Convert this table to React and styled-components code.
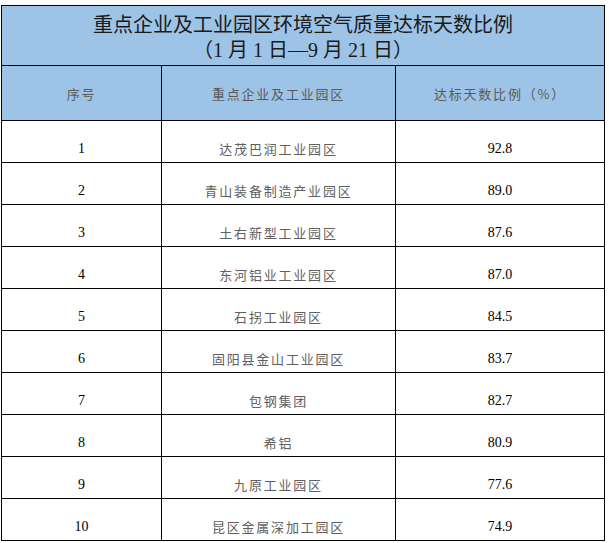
import React from "react";
import styled, { createGlobalStyle } from "styled-components";

const GlobalStyle = createGlobalStyle`
  body {
    margin: 0;
    background: #ffffff;
  }
`;

const rows = [
  { no: 1, name: "达茂巴润工业园区", rate: "92.8" },
  { no: 2, name: "青山装备制造产业园区", rate: "89.0" },
  { no: 3, name: "土右新型工业园区", rate: "87.6" },
  { no: 4, name: "东河铝业工业园区", rate: "87.0" },
  { no: 5, name: "石拐工业园区", rate: "84.5" },
  { no: 6, name: "固阳县金山工业园区", rate: "83.7" },
  { no: 7, name: "包钢集团", rate: "82.7" },
  { no: 8, name: "希铝", rate: "80.9" },
  { no: 9, name: "九原工业园区", rate: "77.6" },
  { no: 10, name: "昆区金属深加工园区", rate: "74.9" },
];

const Page = styled.div`
  padding: 5px 0 0 1px;
`;

const Table = styled.table`
  width: 603px;
  border-collapse: collapse;
  table-layout: fixed;
`;

const TitleCell = styled.th`
  height: 60px;
  padding: 5px 0 0;
  box-sizing: border-box;
  border: 1px solid #000;
  background: #9dc3e6;
  color: #1a1a1a;
  font-family: "Liberation Serif", "Noto Sans CJK SC", serif;
  font-size: 20px;
  font-weight: normal;
  line-height: 25px;
  text-align: center;
`;

const HeadCell = styled.th`
  height: 54px;
  padding: 0;
  border: 1px solid #000;
  background: #9dc3e6;
  color: #5a5a5a;
  font-family: "Noto Sans CJK SC", sans-serif;
  font-size: 13px;
  font-weight: normal;
  letter-spacing: 1.8px;
  text-align: center;
  vertical-align: middle;
`;

const Cell = styled.td`
  height: 42px;
  padding: 0 0 4px;
  box-sizing: border-box;
  border: 1px solid #000;
  text-align: center;
  vertical-align: bottom;
  line-height: 18px;
  font-family: ${(p) =>
    p.$cjk ? `"Noto Sans CJK SC", sans-serif` : `"Liberation Serif", serif`};
  font-size: ${(p) => (p.$cjk ? "13px" : "14px")};
  letter-spacing: ${(p) => (p.$cjk ? "1.8px" : "0")};
  color: ${(p) => (p.$cjk ? "#606060" : "#000")};
`;

export default function App() {
  return (
    <Page>
      <GlobalStyle />
      <Table>
        <colgroup>
          <col style={{ width: 160 }} />
          <col style={{ width: 234 }} />
          <col style={{ width: 209 }} />
        </colgroup>
        <thead>
          <tr>
            <TitleCell colSpan={3}>
              重点企业及工业园区环境空气质量达标天数比例
              <br />
              （1 月 1 日—9 月 21 日）
            </TitleCell>
          </tr>
          <tr>
            <HeadCell>序号</HeadCell>
            <HeadCell>重点企业及工业园区</HeadCell>
            <HeadCell>达标天数比例（%）</HeadCell>
          </tr>
        </thead>
        <tbody>
          {rows.map((r) => (
            <tr key={r.no}>
              <Cell>{r.no}</Cell>
              <Cell $cjk>{r.name}</Cell>
              <Cell>{r.rate}</Cell>
            </tr>
          ))}
        </tbody>
      </Table>
    </Page>
  );
}
